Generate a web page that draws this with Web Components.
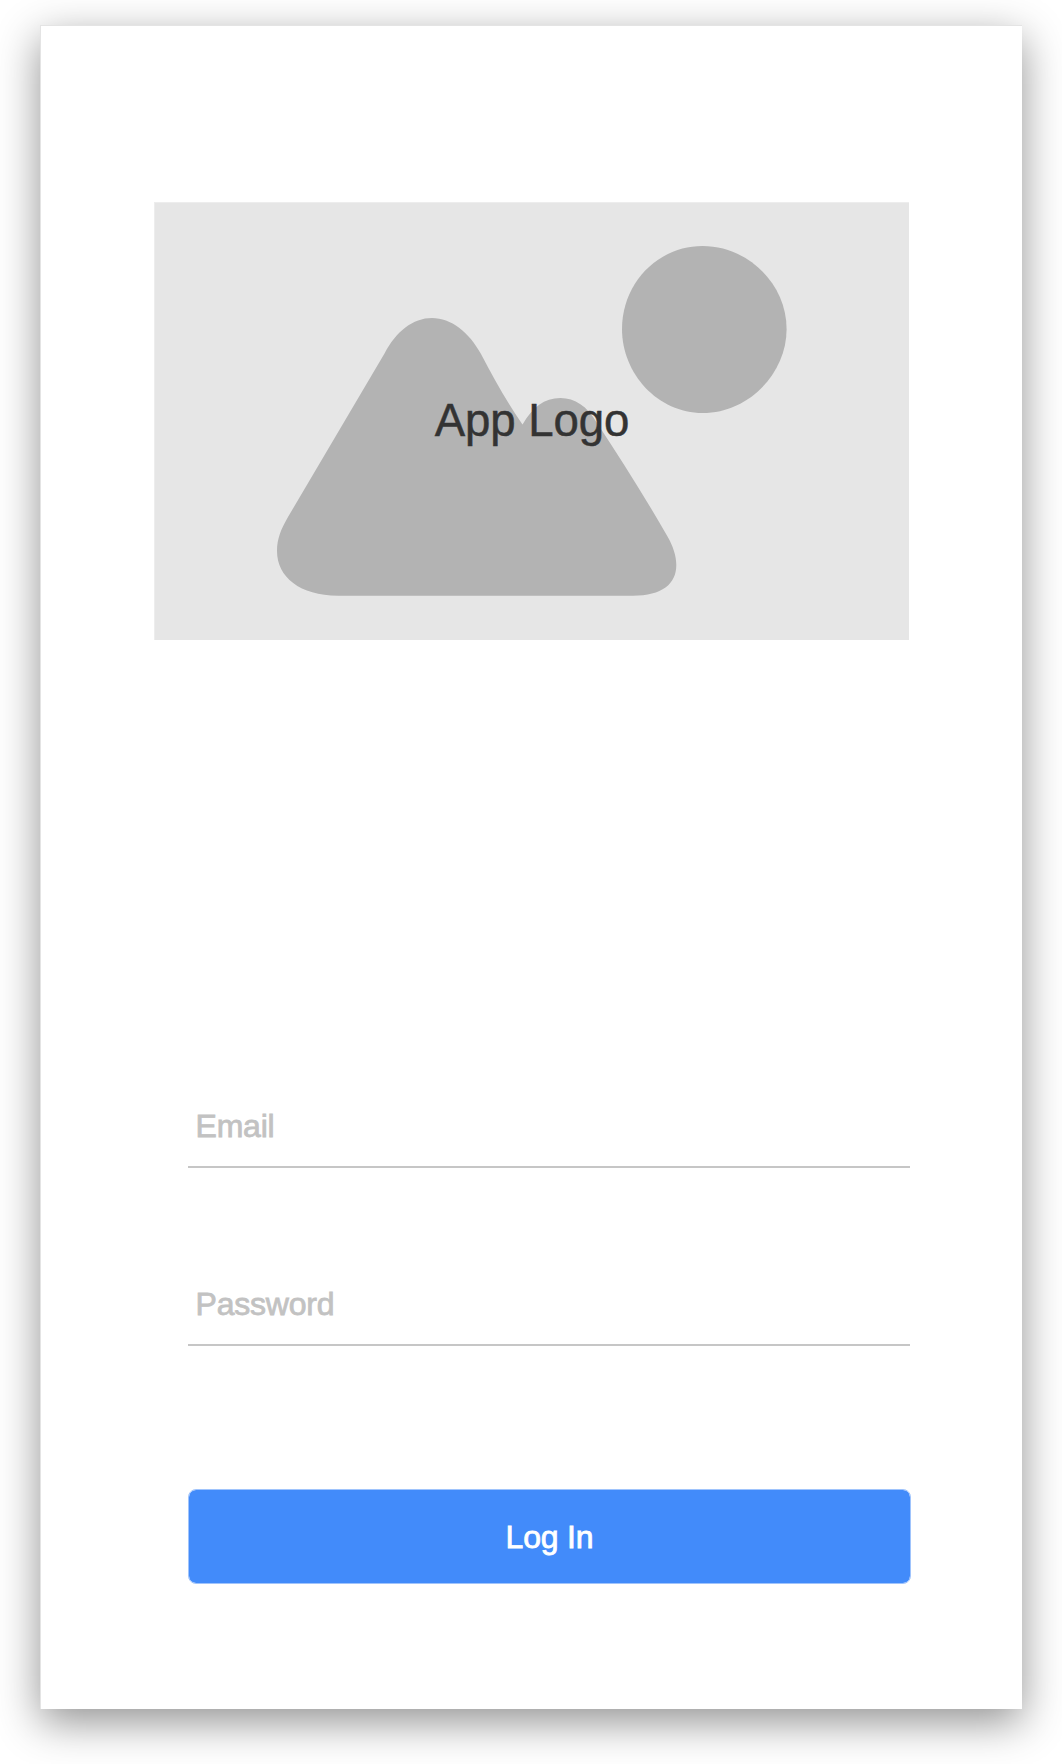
<!DOCTYPE html>
<html lang="en">
<head>
<meta charset="utf-8">
<title>Log In</title>
<style>
html, body { margin: 0; background: #fff; }
body { width: 1062px; height: 1764px; overflow: hidden; font-family: "Liberation Sans", Arial, sans-serif; }
</style>
</head>
<body>
<login-screen>
  <app-logo>App Logo</app-logo>
  <login-form>
    <text-field>Email</text-field>
    <text-field>Password</text-field>
    <primary-button>Log In</primary-button>
  </login-form>
</login-screen>
<script>
function define(name, html) {
  const template = document.createElement('template');
  template.innerHTML = html;
  customElements.define(name, class extends HTMLElement {
    constructor() {
      super();
      this.attachShadow({ mode: 'open' }).append(template.content.cloneNode(true));
    }
  });
}

define('login-screen', `
<style>
:host { display: flex; box-sizing: border-box; width: 1062px; height: 1764px; padding: 25px 40px 55px; }
main { flex: 1; min-width: 0; display: flex; flex-direction: column; background: #fff; padding: 176px 111px 0 113px;
  border: solid #e4e4e4; border-width: 1px 0 0 1px; box-shadow: 0 13px 40px rgba(0,0,0,.43); }
</style>
<main><slot></slot></main>`);

define('app-logo', `
<style>
:host { display: grid; box-sizing: border-box; width: 755px; height: 438px; background: #e6e6e6; color: #333; box-shadow: inset 1px 1px #ededed; }
svg, span { grid-area: 1 / 1; }
svg { display: block; }
span { align-self: center; justify-self: center; font-size: 45.6px; line-height: 52px; white-space: nowrap; letter-spacing: -.1px; padding-left: 1px; -webkit-text-stroke: .5px #333; }
</style>
<svg width="755" height="438" viewBox="154 202 755 438" fill="#b3b3b3" aria-hidden="true">
  <path d="M288 517L384.500 353.500C396 331.500 413 318 432 318C451 318 469 332 481 354C494 379 507 402 522.500 424.500C533 407 544 398 560.500 398C575 398 587 406 597 423C620 458 645 497 667.500 536.500C673 546 676.300 556 676.300 565C676.300 584 662 595.700 633 595.700H338C300 595.700 277 577 277 551C277 539 281 529 288 517Z"/>
  <path d="M702.500 246C748 246 786.600 284 786.600 329C786.600 374 748 413 702.500 413C658 413 622 374 622 329C622 283 658 246 702.500 246Z"/>
</svg>
<span><slot></slot></span>`);

define('login-form', `
<style>
:host { display: flex; flex-direction: column; width: 723px; margin: 454px 0 0 34px; }
</style>
<slot></slot>`);

define('text-field', `
<style>
:host { display: flex; flex-direction: column; justify-content: flex-end; box-sizing: border-box; width: 722px; height: 74px; margin-bottom: 104px;
  padding: 0 7.5px 22px; border-bottom: 2px solid #c6c6c6; font-size: 32px; line-height: 36px; letter-spacing: -.2px; color: #c2c2c2; -webkit-text-stroke: .8px #c2c2c2; }
</style>
<span><slot></slot></span>`);

define('primary-button', `
<style>
:host { display: block; margin-top: 39px; }
button { display: flex; align-items: center; justify-content: center; box-sizing: border-box; width: 723px; height: 95px; padding: 0;
  border: 1px solid #a0c4fc; border-radius: 8px; background: #428bfa; background-clip: padding-box; color: #fff; font: 32px/36px "Liberation Sans", Arial, sans-serif; letter-spacing: -.2px; -webkit-text-stroke: .8px #fff; }
</style>
<button type="button"><slot></slot></button>`);
</script>
</body>
</html>
